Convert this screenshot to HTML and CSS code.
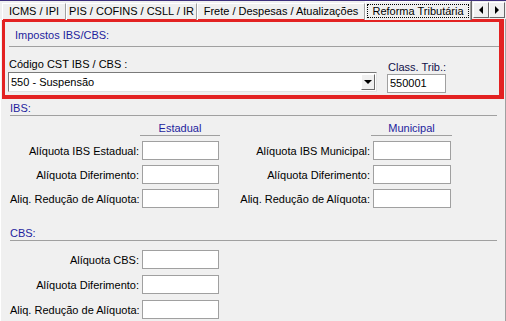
FILE: index.html
```html
<!DOCTYPE html>
<html lang="pt-BR">
<head>
    <meta charset="UTF-8">
    <title>Reforma Tributária</title>
    <link rel="stylesheet" href="styles.css">
</head>
<body>
    <div class="window">
        <div class="tabs">
            <div class="tab tab-icms">ICMS / IPI</div>
            <div class="tab tab-pis">PIS / COFINS / CSLL / IR</div>
            <div class="tab tab-frete">Frete / Despesas / Atualizações</div>
            <div class="tab tab-active"><span class="focus">Reforma Tributária</span></div>
            <div class="scroll">
                <div class="arrow"><span class="tri-left"></span></div>
                <div class="arrow"><span class="tri-right"></span></div>
            </div>
        </div>

        <div class="page">
            <!-- highlighted block -->
            <div class="highlight">
                <div class="hl-title">Impostos IBS/CBS:</div>
                <div class="cst-row">
                    <div class="field field-cst">
                        <div class="label">Código CST IBS / CBS :</div>
                        <div class="combo">
                            <span class="combo-text">550 - Suspensão</span>
                            <span class="combo-btn"><span class="tri-down"></span></span>
                        </div>
                    </div>
                    <div class="field field-class">
                        <div class="label">Class. Trib.:</div>
                        <div class="edit edit-class">550001</div>
                    </div>
                </div>
            </div>

            <div class="group group-ibs">
                <div class="group-title">IBS:</div>
                <div class="grid">
                    <div class="col-head col-a">Estadual</div>
                    <div class="col-head col-b">Municipal</div>

                    <div class="lbl">Alíquota IBS Estadual:</div>
                    <div class="edit"></div>
                    <div class="lbl">Alíquota IBS Municipal:</div>
                    <div class="edit"></div>

                    <div class="lbl">Alíquota Diferimento:</div>
                    <div class="edit"></div>
                    <div class="lbl">Alíquota Diferimento:</div>
                    <div class="edit"></div>

                    <div class="lbl">Aliq. Redução de Alíquota:</div>
                    <div class="edit"></div>
                    <div class="lbl">Aliq. Redução de Alíquota:</div>
                    <div class="edit"></div>
                </div>
            </div>

            <div class="group group-cbs">
                <div class="group-title">CBS:</div>
                <div class="grid grid-cbs">
                    <div class="lbl">Alíquota CBS:</div>
                    <div class="edit"></div>

                    <div class="lbl">Alíquota Diferimento:</div>
                    <div class="edit"></div>

                    <div class="lbl">Aliq. Redução de Alíquota:</div>
                    <div class="edit"></div>
                </div>
            </div>
        </div>
    </div>
</body>
</html>
```

FILE: styles.css
```css
body {
    margin: 0;
    background-color: #f0f0f0;
    font-family: "Liberation Sans", Arial, sans-serif;
    font-size: 11px;
    color: #000;
}
.window {
    width: 506px;
    height: 321px;
    overflow: hidden;
    border-top: 1px solid #3d2f7c;
    box-sizing: border-box;
}

/* tab strip */
.tabs {
    display: flex;
    align-items: flex-start;
    height: 18px;
    padding-left: 2px;
}
.tab {
    flex: none;
    box-sizing: border-box;
    height: 17px;
    margin-top: 2px;
    line-height: 15px;
    text-align: center;
    border-top: 1px solid #fff;
    border-left: 1px solid #fff;
    border-right: 1px solid #a0a0a0;
    box-shadow: 1px 0 0 #696969;
}
.tab-icms {
    width: 64px;
}
.tab-pis {
    width: 131px;
}
.tab-frete {
    width: 168px;
}
.tab-active {
    width: 106px;
    height: 19px;
    margin-top: 0;
    padding-top: 2px;
    line-height: 13px;
    position: relative;
    z-index: 1;
    background-color: #f0f0f0;
}
.focus {
    display: block;
    margin: 0 1px;
    border: 1px dotted #000;
    line-height: 12px;
}
.scroll {
    display: flex;
    margin-left: 2px;
    margin-top: 1px;
}
.arrow {
    box-sizing: border-box;
    width: 16px;
    height: 16px;
    display: flex;
    align-items: center;
    justify-content: center;
    border-top: 1px solid #fff;
    border-left: 1px solid #fff;
    border-right: 1px solid #696969;
    border-bottom: 1px solid #696969;
}
.tri-left {
    border-top: 4px solid transparent;
    border-bottom: 4px solid transparent;
    border-right: 4px solid #000;
}
.tri-right {
    border-top: 4px solid transparent;
    border-bottom: 4px solid transparent;
    border-left: 4px solid #000;
}

/* page */
.page {
    height: 302px;
    border-right: 1px solid #a0a0a0;
    border-left: 1px solid #fff;
}
.highlight {
    margin: 0 1px 0 1px;
    height: 80px;
    box-sizing: border-box;
    border: 3px solid #e32222;
    border-right-width: 5px;
    border-bottom-width: 4px;
    padding: 7px 0 0 3px;
}
.hl-title {
    color: #1e1e9e;
    line-height: 13px;
    padding: 0 0 4px 6px;
    border-bottom: 1px solid #a0a0a0;
    margin-left: 1px;
}
.cst-row {
    display: flex;
    align-items: flex-start;
    margin-top: 11px;
}
.field-cst {
    width: 369px;
}
.field-class {
    margin-left: 10px;
    margin-top: 3px;
}
.label {
    line-height: 13px;
    margin-left: 1px;
    margin-bottom: 1px;
}
.field-class .label {
    color: #10104a;
    margin-bottom: 0;
}
.combo {
    display: flex;
    height: 20px;
    box-sizing: border-box;
    background-color: #fff;
    border: 1px solid;
    border-color: #7a7a7a #e3e3e3 #e3e3e3 #7a7a7a;
}
.combo-text {
    flex: 1;
    line-height: 18px;
    padding-left: 2px;
}
.combo-btn {
    width: 14px;
    margin: 1px 1px 1px 0;
    display: flex;
    align-items: center;
    justify-content: center;
    background-color: #f0f0f0;
    border-top: 1px solid #fff;
    border-left: 1px solid #fff;
    border-right: 1px solid #696969;
    border-bottom: 1px solid #696969;
    box-sizing: border-box;
}
.tri-down {
    border-left: 4px solid transparent;
    border-right: 4px solid transparent;
    border-top: 4px solid #000;
}
.edit {
    height: 19px;
    box-sizing: border-box;
    background-color: #fff;
    border: 1px solid #a0a0a0;
}
.edit-class {
    width: 59px;
    line-height: 17px;
    padding-left: 2px;
}

/* groups */
.group {
    margin: 0 8px 0 9px;
}
.group-ibs {
    padding-top: 3px;
}
.group-cbs {
    margin-top: 19px;
}
.group-title {
    color: #1e1e9e;
    line-height: 13px;
    border-bottom: 1px solid #a0a0a0;
}
.grid {
    display: grid;
    grid-template-columns: 130px 77px 150px 78px;
    column-gap: 2px;
    row-gap: 5px;
    align-items: center;
    margin-top: 6px;
}
.grid-cbs {
    grid-template-columns: 130px 77px;
    row-gap: 6px;
    margin-top: 9px;
}
.col-head {
    color: #1e1e9e;
    text-align: center;
    line-height: 13px;
    border-bottom: 1px solid #a0a0a0;
    margin: 0 -1px 0 -2px;
}
.col-a {
    grid-column: 2;
}
.col-b {
    grid-column: 4;
}
.lbl {
    text-align: right;
    white-space: nowrap;
    padding-right: 1px;
}
```
